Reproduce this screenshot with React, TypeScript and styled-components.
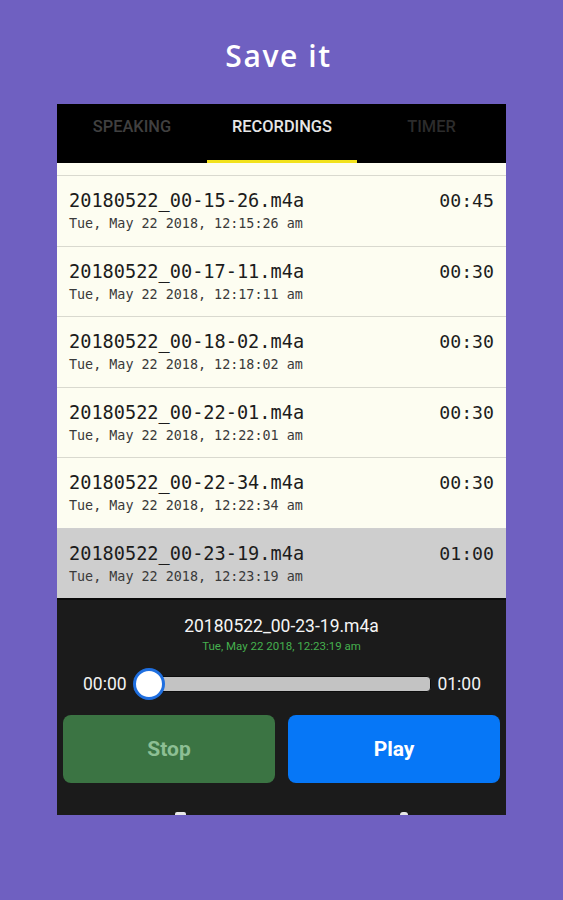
import React from 'react'
import styled, { createGlobalStyle } from 'styled-components'

const GlobalStyle = createGlobalStyle`
    html, body {
        margin: 0;
        padding: 0;
        background: #6f60c1;
    }
    * {
        box-sizing: border-box;
    }
`

type Recording = {
    name: string
    date: string
    duration: string
}

const recordings: Recording[] = [
    { name: '20180522_00-15-26.m4a', date: 'Tue, May 22 2018, 12:15:26 am', duration: '00:45' },
    { name: '20180522_00-17-11.m4a', date: 'Tue, May 22 2018, 12:17:11 am', duration: '00:30' },
    { name: '20180522_00-18-02.m4a', date: 'Tue, May 22 2018, 12:18:02 am', duration: '00:30' },
    { name: '20180522_00-22-01.m4a', date: 'Tue, May 22 2018, 12:22:01 am', duration: '00:30' },
    { name: '20180522_00-22-34.m4a', date: 'Tue, May 22 2018, 12:22:34 am', duration: '00:30' },
    { name: '20180522_00-23-19.m4a', date: 'Tue, May 22 2018, 12:23:19 am', duration: '01:00' }
]

const tabs = ['Speaking', 'Recordings', 'Timer']
const tabColors = ['#404040', '#e6e6e6', '#2c2c2c']

export default function App() {
    const selected = recordings.length - 1
    const current = recordings[selected]

    return (
        <Page>
            <GlobalStyle/>
            <Title>Save it</Title>
            <Phone>
                <TabBar>
                    {tabs.map((tab, index) => (
                        <Tab key={tab} color={tabColors[index]} $active={index === 1}>
                            {tab}
                        </Tab>
                    ))}
                </TabBar>
                <List>
                    {recordings.map((item, index) => (
                        <Row key={item.name} $selected={index === selected}>
                            <RowText>
                                <FileName>{item.name}</FileName>
                                <FileDate>{item.date}</FileDate>
                            </RowText>
                            <Duration>{item.duration}</Duration>
                        </Row>
                    ))}
                </List>
                <Player>
                    <PlayerName>{current.name}</PlayerName>
                    <PlayerDate>{current.date}</PlayerDate>
                    <SliderRow>
                        <TimeLabel>00:00</TimeLabel>
                        <Track>
                            <Thumb/>
                        </Track>
                        <TimeLabel>{current.duration}</TimeLabel>
                    </SliderRow>
                    <Buttons>
                        <ActionButton $bg="#3b7443" $fg="#8dbf94">Stop</ActionButton>
                        <ActionButton $bg="#0677f7" $fg="#ffffff">Play</ActionButton>
                    </Buttons>
                    <Hints>
                        <Hint $round={false}/>
                        <Hint $round/>
                    </Hints>
                </Player>
            </Phone>
        </Page>
    )
}

const Page = styled.div`
    min-height: 900px;
    display: flex;
    flex-direction: column;
    align-items: center;
    background: #6f60c1;
`

const Title = styled.h1`
    margin: 0;
    padding: 38px 6px 0 0;
    font-family: "Open Sans", "Noto Sans", sans-serif;
    font-weight: 600;
    font-size: 30px;
    line-height: 36px;
    letter-spacing: 1.6px;
    color: #ffffff;
`

const Phone = styled.div`
    margin-top: 30px;
    width: 449px;
    height: 711px;
    display: flex;
    flex-direction: column;
    background: #fdfdf1;
    overflow: hidden;
`

const TabBar = styled.div`
    display: grid;
    grid-template-columns: 150px 150px 149px;
    height: 59px;
    background: #000000;
`

const Tab = styled.div<{ color: string; $active: boolean }>`
    padding-top: 14px;
    text-align: center;
    text-transform: uppercase;
    font-family: Roboto, "Liberation Sans", sans-serif;
    font-weight: 500;
    font-size: 16.4px;
    line-height: 18px;
    color: ${({ color }) => color};
    border-bottom: 3px solid ${({ $active }) => ($active ? '#f2e21c' : 'transparent')};
`

const List = styled.div`
    height: 435px;
    padding-top: 12px;
    display: flex;
    flex-direction: column;
    background: #fdfdf1;
`

const Row = styled.div<{ $selected: boolean }>`
    height: 70.5px;
    flex: none;
    display: flex;
    justify-content: space-between;
    align-items: flex-start;
    padding: 15px 12px 0 12px;
    border-top: 1px solid ${({ $selected }) => ($selected ? '#cfcfcf' : '#d9d9cf')};
    background: ${({ $selected }) => ($selected ? '#cecece' : '#fdfdf1')};
`

const RowText = styled.div`
    display: flex;
    flex-direction: column;
`

const FileName = styled.div`
    font-family: "DejaVu Sans Mono", "Liberation Mono", monospace;
    font-size: 18.6px;
    line-height: 20px;
    color: #1c1c1c;
`

const FileDate = styled.div`
    margin-top: 5px;
    font-family: "DejaVu Sans Mono", "Liberation Mono", monospace;
    font-size: 13.4px;
    line-height: 16px;
    color: #3a3a3a;
`

const Duration = styled(FileName)`
    font-size: 18.2px;
`

const Player = styled.div`
    flex: 1;
    display: flex;
    flex-direction: column;
    align-items: center;
    padding-top: 16px;
    background: #1b1b1b;
    border-top: 2px solid #0a0a0a;
`

const PlayerName = styled.div`
    font-family: Roboto, "Liberation Sans", sans-serif;
    font-size: 17.5px;
    line-height: 20px;
    color: #f5f5f5;
`

const PlayerDate = styled.div`
    margin-top: 3px;
    font-family: Roboto, "Liberation Sans", sans-serif;
    font-size: 11.5px;
    line-height: 14px;
    color: #45b04e;
`

const SliderRow = styled.div`
    align-self: stretch;
    margin-top: 15px;
    height: 32px;
    display: flex;
    align-items: center;
    gap: 6px;
    padding: 0 25px 0 26px;
`

const TimeLabel = styled.div`
    font-family: Roboto, "Liberation Sans", sans-serif;
    font-size: 17.5px;
    color: #f2f2f2;
`

const Track = styled.div`
    position: relative;
    flex: 1;
    height: 16px;
    border-radius: 4px;
    background: #c3c3c3;
    border: 1px solid #0d0d0d;
`

const Thumb = styled.div`
    position: absolute;
    left: -1px;
    top: 50%;
    width: 32px;
    height: 32px;
    margin-top: -16px;
    border-radius: 50%;
    background: #ffffff;
    border: 3px solid #1f6fe0;
`

const Buttons = styled.div`
    align-self: stretch;
    margin-top: 15px;
    display: grid;
    grid-template-columns: 1fr 1fr;
    gap: 13px;
    padding: 0 6px;
`

const ActionButton = styled.button<{ $bg: string; $fg: string }>`
    height: 68px;
    border: none;
    border-radius: 8px;
    background: ${({ $bg }) => $bg};
    color: ${({ $fg }) => $fg};
    font-family: Roboto, "Liberation Sans", sans-serif;
    font-weight: 700;
    font-size: 21px;
`

const Hints = styled.div`
    align-self: stretch;
    flex: 1;
    display: flex;
    align-items: flex-end;
    gap: 214px;
    padding-left: 118px;
`

const Hint = styled.div<{ $round: boolean }>`
    width: ${({ $round }) => ($round ? '8px' : '11px')};
    height: 3px;
    border-radius: ${({ $round }) => ($round ? '4px 4px 0 0' : '2px 2px 0 0')};
    background: #e8e8e8;
`
